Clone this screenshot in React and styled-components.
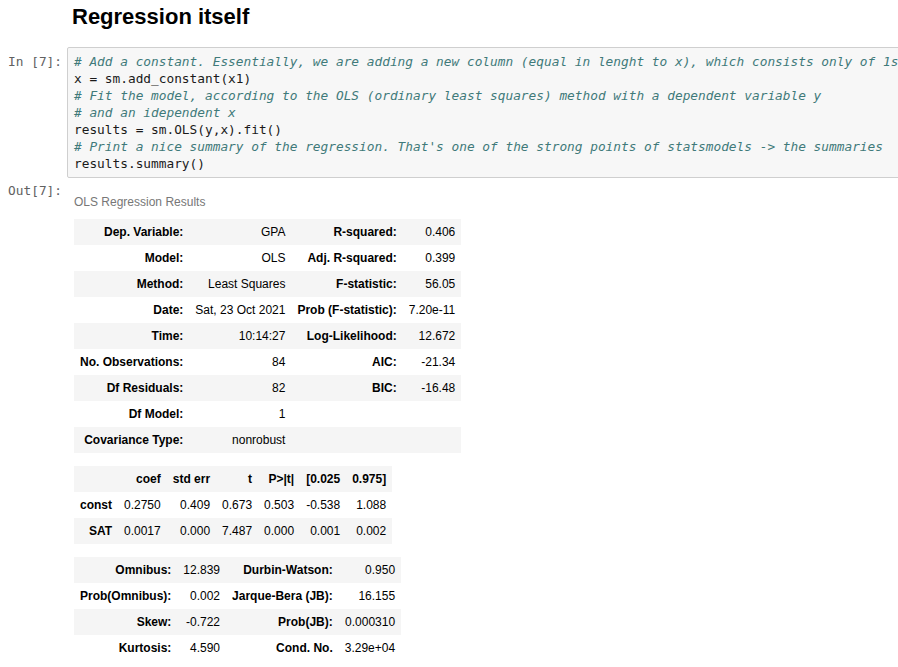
import React from "react";
import styled, { createGlobalStyle } from "styled-components";

const GlobalStyle = createGlobalStyle`
  html, body {
    margin: 0;
    padding: 0;
    background: #ffffff;
    overflow: hidden;
  }
  body {
    font-family: "Liberation Sans", Arial, sans-serif;
    color: #000;
  }
`;

const Page = styled.div`
  width: 940px;
  padding-top: 4px;
`;

const MarkdownCell = styled.div`
  padding-left: 72px;
`;

const Heading = styled.h2`
  margin: 0;
  font-family: "Liberation Sans", Arial, Helvetica, sans-serif;
  font-weight: bold;
  font-size: 22px;
  line-height: 25px;
  color: #000;
`;

const Cell = styled.div`
  display: grid;
  grid-template-columns: 67px 1fr;
  margin-top: ${(p) => p.$gap || 0}px;
`;

const Prompt = styled.div`
  font-family: "DejaVu Sans Mono", monospace;
  font-size: 12.8px;
  line-height: 17px;
  color: #616161;
  text-align: right;
  padding-right: 5px;
  padding-top: ${(p) => p.$top}px;
  white-space: pre;
`;

const CodeBox = styled.div`
  border: 1px solid #cfcfcf;
  border-radius: 2px;
  background: #f7f7f7;
  padding: 5px 6px 5px 6px;
`;

const CodeLine = styled.div`
  font-family: "DejaVu Sans Mono", monospace;
  font-size: 12.8px;
  line-height: 17px;
  color: #1a1a1a;
  white-space: pre;
`;

const Comment = styled.span`
  font-style: italic;
  color: #3f7a7a;
`;

const OutputArea = styled.div`
  padding-top: 8px;
  padding-left: 7px;
`;

const SummaryTable = styled.table`
  border-collapse: collapse;
  border-spacing: 0;
  font-family: "Liberation Sans", Arial, sans-serif;
  font-size: 12px;
  color: #000;
  margin: 0 0 13px 0;
`;

const Caption = styled.caption`
  caption-side: top;
  text-align: left;
  color: #777777;
  padding: 8px 0;
  line-height: 17px;
  font-size: 12px;
`;

const Row = styled.tr`
  &:nth-child(odd) {
    background: #f5f5f5;
  }
`;

const Th = styled.th`
  font-weight: bold;
  text-align: right;
  vertical-align: middle;
  padding: 6px;
  line-height: 14px;
  white-space: nowrap;
`;

const Td = styled.td`
  font-weight: normal;
  text-align: right;
  vertical-align: middle;
  padding: 6px;
  line-height: 14px;
  white-space: nowrap;
`;

const code = [
  { c: true, t: "# Add a constant. Essentially, we are adding a new column (equal in lenght to x), which consists only of 1s" },
  { c: false, t: "x = sm.add_constant(x1)" },
  { c: true, t: "# Fit the model, according to the OLS (ordinary least squares) method with a dependent variable y" },
  { c: true, t: "# and an idependent x" },
  { c: false, t: "results = sm.OLS(y,x).fit()" },
  { c: true, t: "# Print a nice summary of the regression. That's one of the strong points of statsmodels -> the summaries" },
  { c: false, t: "results.summary()" },
];

const table1 = [
  ["Dep. Variable:", "GPA", "R-squared:", "0.406"],
  ["Model:", "OLS", "Adj. R-squared:", "0.399"],
  ["Method:", "Least Squares", "F-statistic:", "56.05"],
  ["Date:", "Sat, 23 Oct 2021", "Prob (F-statistic):", "7.20e-11"],
  ["Time:", "10:14:27", "Log-Likelihood:", "12.672"],
  ["No. Observations:", "84", "AIC:", "-21.34"],
  ["Df Residuals:", "82", "BIC:", "-16.48"],
  ["Df Model:", "1", "", ""],
  ["Covariance Type:", "nonrobust", "", ""],
];

const table2Head = ["coef", "std err", "t", "P>|t|", "[0.025", "0.975]"];
const table2 = [
  ["const", "0.2750", "0.409", "0.673", "0.503", "-0.538", "1.088"],
  ["SAT", "0.0017", "0.000", "7.487", "0.000", "0.001", "0.002"],
];

const table3 = [
  ["Omnibus:", "12.839", "Durbin-Watson:", "0.950"],
  ["Prob(Omnibus):", "0.002", "Jarque-Bera (JB):", "16.155"],
  ["Skew:", "-0.722", "Prob(JB):", "0.000310"],
  ["Kurtosis:", "4.590", "Cond. No.", "3.29e+04"],
];

const PairRow = ({ r }) => (
  <Row>
    <Th>{r[0]}</Th>
    <Td>{r[1]}</Td>
    <Th>{r[2]}</Th>
    <Td>{r[3]}</Td>
  </Row>
);

export default function App() {
  return (
    <>
      <GlobalStyle />
      <Page>
        <MarkdownCell>
          <Heading>Regression itself</Heading>
        </MarkdownCell>

        <Cell $gap={18}>
          <Prompt $top={6}>In [7]:</Prompt>
          <CodeBox>
            {code.map((l, i) => (
              <CodeLine key={i}>{l.c ? <Comment>{l.t}</Comment> : l.t}</CodeLine>
            ))}
          </CodeBox>
        </Cell>

        <Cell>
          <Prompt $top={4}>Out[7]:</Prompt>
          <OutputArea>
            <SummaryTable>
              <Caption>OLS Regression Results</Caption>
              <tbody>
                {table1.map((r, i) => (
                  <PairRow key={i} r={r} />
                ))}
              </tbody>
            </SummaryTable>
            <SummaryTable>
              <tbody>
                <Row>
                  <Td></Td>
                  {table2Head.map((h) => (
                    <Th key={h}>{h}</Th>
                  ))}
                </Row>
                {table2.map((r) => (
                  <Row key={r[0]}>
                    <Th>{r[0]}</Th>
                    {r.slice(1).map((v, j) => (
                      <Td key={j}>{v}</Td>
                    ))}
                  </Row>
                ))}
              </tbody>
            </SummaryTable>
            <SummaryTable>
              <tbody>
                {table3.map((r, i) => (
                  <PairRow key={i} r={r} />
                ))}
              </tbody>
            </SummaryTable>
          </OutputArea>
        </Cell>
      </Page>
    </>
  );
}
